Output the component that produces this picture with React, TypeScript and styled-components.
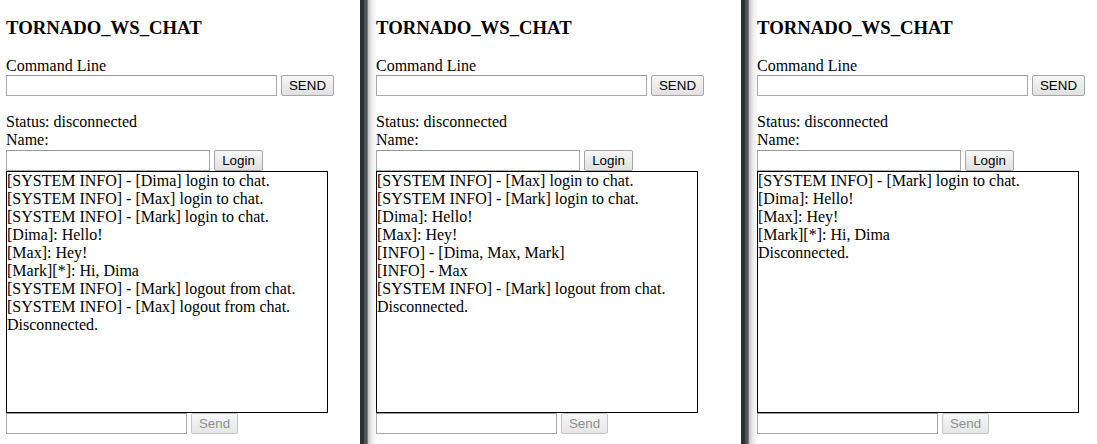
import React from "react";
import styled, { createGlobalStyle } from "styled-components";

const GlobalStyle = createGlobalStyle`
	html, body {
		margin: 0;
		padding: 0;
		background: #fff;
		overflow: hidden;
	}
	body {
		font-family: "Liberation Serif", "Times New Roman", serif;
		font-size: 16px;
		color: #000;
	}
`;

const Screen = styled.div`
	display: flex;
	width: 1097px;
	height: 444px;
	overflow: hidden;
`;

const Divider = styled.div`
	flex: 0 0 8px;
	background: linear-gradient(to right, #2b2f33 0, #2b2f33 4px, #4b4d50 4px, #55575a 7px, #9a9a9a 8px);
`;

const Window = styled.section<{ $width?: number; $pad: number; $shade?: boolean }>`
	flex: ${(p) => (p.$width ? `0 0 ${p.$width}px` : "1 1 auto")};
	display: flex;
	flex-direction: column;
	align-items: flex-start;
	padding-left: ${(p) => p.$pad}px;
	background: ${(p) => (p.$shade ? "linear-gradient(to right, #c4c4c4 0, #ececec 4px, #fff 9px)" : "#fff")};
	box-sizing: border-box;
	overflow: hidden;
`;

const Title = styled.h3`
	margin: 17px 0 0;
	height: 21px;
	line-height: 21px;
	font-size: 18.72px;
	font-weight: bold;
	white-space: nowrap;
`;

const Label = styled.div<{ $gap?: number }>`
	margin-top: ${(p) => p.$gap ?? 0}px;
	height: 18px;
	line-height: 18px;
	white-space: nowrap;
`;

const Row = styled.div<{ $gap?: number }>`
	display: flex;
	align-items: center;
	gap: 4px;
	height: 21px;
	margin-top: ${(p) => p.$gap ?? 0}px;
`;

const Field = styled.input<{ $w: number }>`
	width: ${(p) => p.$w}px;
	height: 21px;
	box-sizing: border-box;
	border: 1px solid #a9a9a9;
	border-top-color: #999;
	padding: 0 2px;
	margin: 0;
	background: #fff;
	outline: none;
`;

const Button = styled.button<{ $w: number }>`
	width: ${(p) => p.$w}px;
	height: 21px;
	box-sizing: border-box;
	margin: 0;
	padding: 0;
	border: 1px solid #a6a6a6;
	border-radius: 2px;
	background: linear-gradient(to bottom, #f7f7f7, #e0e0e0);
	font-family: "Liberation Sans", Arial, sans-serif;
	font-size: 13.33px;
	color: #000;
	&:disabled {
		color: #8e8e8e;
		border-color: #c4c4c4;
		background: linear-gradient(to bottom, #f7f7f7, #e6e6e6);
	}
`;

const Log = styled.div`
	width: 322px;
	height: 242px;
	box-sizing: border-box;
	border: 1px solid #000;
	line-height: 18px;
	white-space: nowrap;
	overflow: hidden;
`;

type Chat = { width?: number; pad: number; shade?: boolean; lines: string[] };

const chats: Chat[] = [
	{
		width: 360,
		pad: 6,
		lines: [
			"[SYSTEM INFO] - [Dima] login to chat.",
			"[SYSTEM INFO] - [Max] login to chat.",
			"[SYSTEM INFO] - [Mark] login to chat.",
			"[Dima]: Hello!",
			"[Max]: Hey!",
			"[Mark][*]: Hi, Dima",
			"[SYSTEM INFO] - [Mark] logout from chat.",
			"[SYSTEM INFO] - [Max] logout from chat.",
			"Disconnected.",
		],
	},
	{
		width: 373,
		pad: 8,
		shade: true,
		lines: [
			"[SYSTEM INFO] - [Max] login to chat.",
			"[SYSTEM INFO] - [Mark] login to chat.",
			"[Dima]: Hello!",
			"[Max]: Hey!",
			"[INFO] - [Dima, Max, Mark]",
			"[INFO] - Max",
			"[SYSTEM INFO] - [Mark] logout from chat.",
			"Disconnected.",
		],
	},
	{
		pad: 8,
		shade: true,
		lines: [
			"[SYSTEM INFO] - [Mark] login to chat.",
			"[Dima]: Hello!",
			"[Max]: Hey!",
			"[Mark][*]: Hi, Dima",
			"Disconnected.",
		],
	},
];

const ChatWindow = ({ chat }: { chat: Chat }) => (
	<Window $width={chat.width} $pad={chat.pad} $shade={chat.shade}>
		<Title>TORNADO_WS_CHAT</Title>
		<Label $gap={19}>Command Line</Label>
		<Row>
			<Field $w={271} />
			<Button $w={53}>SEND</Button>
		</Row>
		<Label $gap={17}>Status: disconnected</Label>
		<Label>Name:</Label>
		<Row $gap={1}>
			<Field $w={204} />
			<Button $w={49}>Login</Button>
		</Row>
		<Log>
			{chat.lines.map((l, i) => (
				<div key={i}>{l}</div>
			))}
		</Log>
		<Row>
			<Field $w={181} />
			<Button $w={47} disabled>
				Send
			</Button>
		</Row>
	</Window>
);

export default function App() {
	return (
		<>
			<GlobalStyle />
			<Screen>
				{chats.map((c, i) => (
					<React.Fragment key={i}>
						{i > 0 && <Divider />}
						<ChatWindow chat={c} />
					</React.Fragment>
				))}
			</Screen>
		</>
	);
}
